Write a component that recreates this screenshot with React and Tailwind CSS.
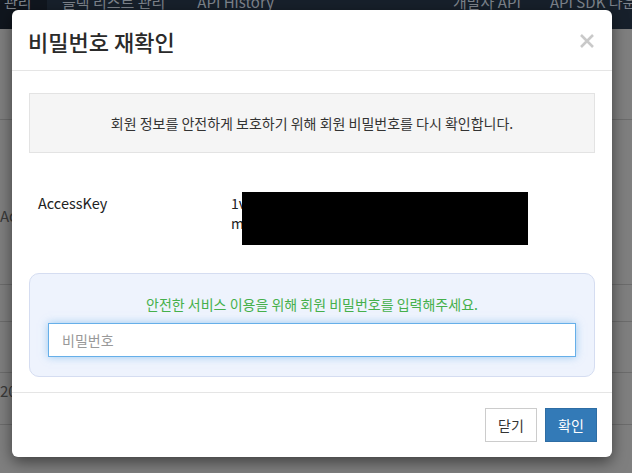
export default function App() {
  return (
    <div
      className="relative w-[632px] h-[473px] overflow-hidden bg-[#7f7f7f]"
      style={{ fontFamily: '"Noto Sans CJK KR", "Noto Sans", sans-serif' }}
    >
      {/* page behind the backdrop */}
      <div className="h-[29px] bg-[#17202b] flex text-[15px] leading-[20px] text-[#7d838b] overflow-hidden">
        <div className="w-[47px] bg-[#10161e] pl-[4px] -mt-[8px]">관리</div>
        <div className="pl-[15px] -mt-[8px]">블랙 리스트 관리</div>
        <div className="pl-[32px] -mt-[8px]">API History</div>
        <div className="ml-auto w-[97px] -mt-[8px]">개발사 API</div>
        <div className="-mt-[8px] whitespace-nowrap w-[82px]">API SDK 다운로드</div>
      </div>
      <div className="text-[15px] text-[#3a3a3a]">
        <div className="h-[91px] border-b border-[#6c6c6c]" />
        <div className="h-[165px] border-b border-[#6c6c6c] pt-[86px] leading-[20px]">Ac</div>
        <div className="h-[37px] border-b border-[#6c6c6c]" />
        <div className="h-[51px] border-b border-[#6c6c6c]" />
        <div className="h-[52px] border-b border-[#6c6c6c] pt-[8px] leading-[20px]">20</div>
      </div>

      {/* modal */}
      <div className="absolute inset-0">
        <div className="ml-[12px] mt-[10px] w-[600px] bg-white rounded-[6px] shadow-[0_5px_15px_rgba(0,0,0,0.5)] text-[#333]">
          <div className="flex items-center justify-between h-[61px] px-[16px] border-b border-[#e5e5e5]">
            <div className="text-[22px] leading-[30px] font-medium text-[#2a2a2a] pt-[1px]">비밀번호 재확인</div>
            <svg width="14" height="14" viewBox="0 0 14 14" className="mr-[2px] mt-[2px]">
              <path d="M1 1L13 13M13 1L1 13" stroke="#c9c9c9" strokeWidth="2.6" />
            </svg>
          </div>

          <div className="px-[17px] pt-[22px] pb-[15px] border-b border-[#e5e5e5]">
            <div className="h-[60px] flex items-center justify-center bg-[#f5f5f5] border border-[#e3e3e3] text-[14px] text-[#333]">
              회원 정보를 안전하게 보호하기 위해 회원 비밀번호를 다시 확인합니다.
            </div>

            <div className="flex mt-[40px] text-[14px] leading-[20px] text-[#222]">
              <div className="w-[202px] pl-[9px] text-[14.5px]">AccessKey</div>
              <div className="relative">
                <div>1v</div>
                <div>m</div>
                <div className="absolute left-[11px] -top-[1px] w-[286px] h-[53px] bg-black" />
              </div>
            </div>

            <div className="mt-[40px] rounded-[10px] bg-[#eef3fd] border border-[#d5ddf1] px-[18px] pt-[20px] pb-[19px]">
              <div className="text-center text-[14px] leading-[20px] text-[#45b04b]">
                안전한 서비스 이용을 위해 회원 비밀번호를 입력해주세요.
              </div>
              <input
                type="password"
                placeholder="비밀번호"
                className="mt-[9px] block w-full h-[34px] px-[13px] bg-white border border-[#66afe9] shadow-[0_0_8px_rgba(102,175,233,0.6)] text-[14px] outline-none placeholder:text-[#999]"
              />
            </div>
          </div>

          <div className="flex justify-end gap-[8px] px-[15px] py-[15px]">
            <button className="h-[34px] w-[52px] border border-[#ccc] bg-white text-[14px] text-[#333]">닫기</button>
            <button className="h-[34px] w-[52px] border border-[#2e6da4] bg-[#337ab7] text-[14px] text-white">확인</button>
          </div>
        </div>
      </div>
    </div>
  )
}
